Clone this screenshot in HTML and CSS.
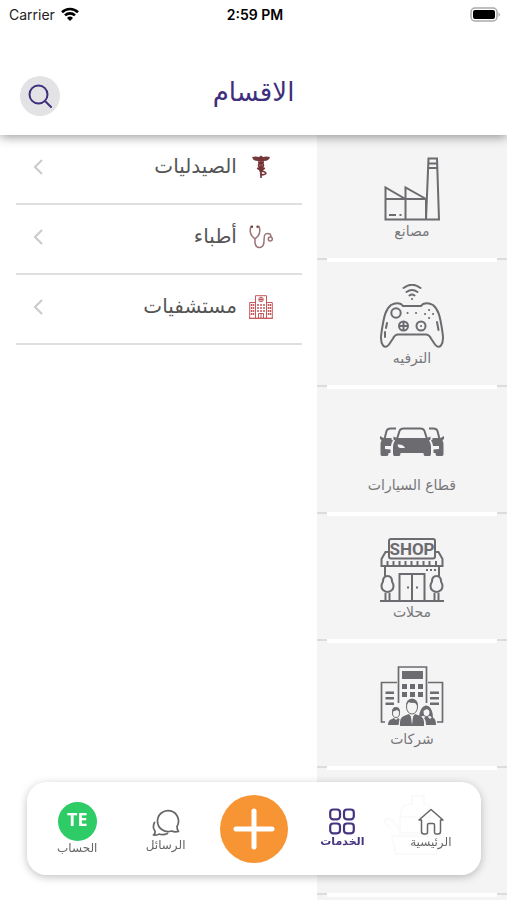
FILE: index.html
```html
<!DOCTYPE html>
<html lang="ar" dir="rtl">
<head>
<meta charset="utf-8">
<meta name="viewport" content="width=device-width, initial-scale=1">
<title>الاقسام</title>
<link rel="stylesheet" href="styles.css">
</head>
<body>
<div class="app">
  <header class="top">
    <div class="status" dir="ltr">
      <div class="carrier">Carrier
        <svg width="18" height="14" viewBox="0 0 18 14" aria-hidden="true"><g fill="none" stroke="#000" stroke-width="2.6"><path d="M1 5.2a11.6 11.6 0 0 1 16 0"/><path d="M4 8.4a7.2 7.2 0 0 1 10 0"/></g><path d="M9 14 6 10.9a4.4 4.4 0 0 1 6 0z"/></svg>
      </div>
      <div class="time">2:59 PM</div>
      <svg class="battery" width="31" height="15" viewBox="0 0 31 15" aria-hidden="true"><rect x="1" y="1" width="26" height="13" rx="4" fill="#fff" stroke="#aaa" stroke-width="1.5"/><rect x="3" y="3" width="22" height="9" rx="2"/><path d="M28.500 5.200q3 2.300 0 4.600z" fill="#aaa"/></svg>
    </div>
    <div class="bar">
      <h1 class="title">الاقسام</h1>
      <button class="search" aria-label="بحث">
        <svg width="24" height="24" viewBox="0 0 24 24" fill="none" stroke="#3f2f7c" stroke-width="2" stroke-linecap="round"><circle cx="10.500" cy="10.500" r="9"/><path d="m17 17 6 6"/></svg>
      </button>
    </div>
  </header>

  <main class="content">
    <nav class="tiles" aria-label="الاقسام">
      <a class="tile" href="#">
        <svg width="64" height="64" viewBox="0 0 64 64" fill="none" stroke="#6b6b70" stroke-width="2"><path d="M5.500 62.500V30.500L25.500 42V30.500L46 42V62.500zM5.500 42H46M25.500 42v20.500M46 62.500 48.500 1.500h8.500l2 61H46M48 6.500h9.500M48 11h10"/><path d="M9 58h7M19.500 58h2"/></svg>
        <span>مصانع</span>
      </a>
      <a class="tile" href="#">
        <svg width="64" height="64" viewBox="0 0 64 64" fill="none" stroke="#6b6b70" stroke-width="2"><path d="M18 50.500h28q3 0 5 4l4 6q3 4 6 1 3-4 1.500-13C60 31 58 25 53 21q-5-3-10-1l-2 2H23l-2-2q-5-2-10 1C6 25 4 31 1.500 48.500Q0 57.500 3 61.500q3 3 6-1l4-6q2-4 5-4z"/><circle cx="16" cy="29" r="4.700"/><circle cx="23.500" cy="42" r="4.500"/><path d="M23.500 38v8M19.500 42h8"/><circle cx="41" cy="42" r="4.500"/><g stroke-linecap="round"><path d="M7 39l-1 5M5 48v5M57 38l1.500 8M41 42h.1M27.500 29h.1M36 29h.1M45 30h.1M53 30h.1M49 26h.1M49 34h.1"/><path d="M23.500 4q8.500-6.500 17 0M26.500 8q5.500-4 11 0M29.500 11.500q2.500-2 5 0M32 15h.1"/></g></svg>
        <span>الترفيه</span>
      </a>
      <a class="tile" href="#">
        <svg width="64" height="64" viewBox="0 0 64 64"><g fill="none" stroke="#6b6b70" stroke-width="2"><path d="M17 28l2.500-8q1-2.500 4-2.500h17q3 0 4 2.500L47 28M4.500 28l2-8q1-2.500 4-2.500H16M59.500 28l-2-8q-1-2.500-4-2.500H49"/></g><g fill="#6b6b70"><path d="M17 27h30l3.500-1.500v3L49 29.500q2 2.500 2 6V42q0 3-1 3h-5q-1.500 0-1.500-3h-23q0 3-1.500 3h-5q-1 0-1-3v-6.500q0-3.500 2-6l-1.500-1v-3z"/><path d="M3.500 27 0 25v3l1.500 1Q.500 31 .500 35v8q0 2 1.500 2h5q1.500 0 1.500-3H10.500v-3.500L5 38v-3h6q0-3 2-5.500l-1.500-1V27z"/><path d="m60.500 27 3.500-2v3l-1.500 1q1 2 1 6v8q0 2-1.500 2h-5q-1.500 0-1.500-3H53.500v-3.500L59 38v-3h-6q0-3-2-5.500l1.500-1V27z"/></g><path d="M17.500 33.500q6-.5 7.500 3.500h-4.500q-2.500 0-3-3.500z" fill="#f4f4f4"/></svg>
        <span>قطاع السيارات</span>
      </a>
      <a class="tile" href="#">
        <svg width="64" height="64" viewBox="0 0 64 64" fill="none" stroke="#6b6b70" stroke-width="2"><rect x="9" y="1" width="46" height="19.500" rx="2"/><text class="shop" x="32" y="17" text-anchor="middle">SHOP</text><path d="M9 14H5.500L1.500 21v7h61v-7L58.500 14H55M7.500 28v-5M13.500 28v-5M19.500 28v-5M25.500 28v-5M31.500 28v-5M37.500 28v-5M43.500 28v-5M49.500 28v-5M56 28v-5M5 28v10M59 28v10M19.500 63V36h25v27M32 36v27M0 63h64M5.500 63v-8M9.500 63v-8M54.500 63v-8M58.500 63v-8"/><path d="M7.500 38q4.500 0 4.500 5.500 3 5 0 8.500-4.500 4-9 0-3-3.500 0-8.500Q3 38 7.500 38zM56.500 38q4.500 0 4.500 5.500 3 5 0 8.500-4.500 4-9 0-3-3.500 0-8.500 0-5.500 4.500-5.500z"/><path d="M46 32h2M50 32h2M54 32h2M27 49.500h2M36 49.500h2"/></svg>
        <span>محلات</span>
      </a>
      <a class="tile" href="#">
        <svg width="64" height="64" viewBox="0 0 64 64"><path d="M18.500 38V2h28v36M17 17.500H1.500V57H5M48 17.500h14.500V57H57" fill="none" stroke="#6b6b70" stroke-width="1.700"/><g fill="#6b6b70"><path d="M22 6h21v8H22zM22 19h5v5h-5zM30 19h5v5h-5zM38 19h5v5h-5zM22 27h5v5h-5zM30 27h5v5h-5zM38 27h5v5h-5zM5.500 26.500H14V29H5.500zM5.500 32H14v2.500H5.500zM5.500 37.500H14V40H5.500zM50 26.500h9V29h-9zM50 32h9v2.500h-9zM50 37.500h9V40h-9z"/><path d="M20 61q-1-9 5-10.500l4-1.500 3 4 3-4 4 1.500q6 1.500 5 10.500zM8 60q0-5 4-6l2-1 2 2 2-2 1.500 1L18.500 60zM46 60q0-5-2-7l3-2 3 3 2-2q4 1 4 8z"/><path d="M39 52q1-10 6.500-11.500 7 0 7.500 12.500l-3-2H43z"/></g><g fill="#f4f4f4" stroke="#6b6b70"><ellipse cx="32" cy="42" rx="5.500" ry="7"/><ellipse cx="16" cy="48" rx="3.500" ry="4.500"/><ellipse cx="46.500" cy="47" rx="3.500" ry="4.500"/></g><path d="M26 41q0-7 6-7.500 6 .5 6 7.500l-3-3q-5 0-7-1zM12 47q0-5 4-5t4 5l-3-2zM43 46q2-5 5-4l3 5-4-3z" fill="#6b6b70"/><path d="m31 52 1 8 1-8z" fill="#f4f4f4"/></svg>
        <span>شركات</span>
      </a>
      <a class="tile" href="#" aria-label="قسم آخر">
        <svg width="64" height="64" viewBox="0 0 64 64" fill="none" stroke="#6b6b70" stroke-width="2"><path d="M22 16q2-4 10-4V4h12v8q5 0 6 5v8H20zM20 25h30v16H20zM10 36q-6-4-5-8 5-3 9 2l6 8M12 44h48l-4 18H16z"/></svg>
      </a>
      <a class="tile" href="#" aria-label="المزيد"></a>
    </nav>

    <ul class="list">
      <li><a class="row" href="#">
        <svg width="24" height="24" viewBox="0 0 24 24"><path d="M3 2q4-1 7 0l2-1.500L14 2q3-1 7 0-1 4-6 4H9Q4 6 3 2z" fill="#74383b"/><path d="M9 6h6l-1 6-1 8-1 3-1-3-1-8z" fill="#b98f90"/><path d="M12 2v21M9 7q6 1 5.500 3.500T10 13t3.500 3-1.500 4M15 7q-6 1-5.500 3.500T14 13t-3.500 3" fill="none" stroke="#743034" stroke-width="1.500"/></svg>
        <span class="name">الصيدليات</span>
        <svg class="chev" width="9" height="16" viewBox="0 0 9 16"><path d="M8 1 1 8l7 7"/></svg>
      </a></li>
      <li><a class="row" href="#">
        <svg width="24" height="24" viewBox="0 0 24 24" fill="none" stroke="#9c7375" stroke-width="1.500"><path d="M4 1.500H2Q0 7 3 11l3 3 3-3q3-4 1-9.500H8M6 14v4q1 5 5 4.500t4-6.500 1.500-7 4.500 0q1 1 1 3"/><circle cx="21.300" cy="14" r="2"/><path d="M3 .8v2M8.500.8v2" stroke="#683c3f" stroke-width="2"/></svg>
        <span class="name">أطباء</span>
        <svg class="chev" width="9" height="16" viewBox="0 0 9 16"><path d="M8 1 1 8l7 7"/></svg>
      </a></li>
      <li><a class="row" href="#">
        <svg width="24" height="24" viewBox="0 0 24 24" fill="none" stroke="#c4585b"><path d="M6.500 23V.7h11V23M6 7.500H.7v15.800h22.600V7.500H18M0 23.300h24"/><circle cx="12" cy="4.500" r="2.300"/><path d="M12 2.500v4M10 4.500h4M9.500 23v-4.500h5V23M12 18.500V23"/><path d="M2.500 9v12M4.500 9v12M19.500 9v12M21.500 9v12M9 9v8M12 9v8M15 9v8" stroke-width="1.500" stroke-dasharray="2 1"/></svg>
        <span class="name">مستشفيات</span>
        <svg class="chev" width="9" height="16" viewBox="0 0 9 16"><path d="M8 1 1 8l7 7"/></svg>
      </a></li>
    </ul>
  </main>

  <nav class="dock" aria-label="التنقل">
    <a class="tab" href="#">
      <svg width="26" height="27" viewBox="0 0 26 27" fill="none" stroke="#666" stroke-width="1.500" stroke-linejoin="round"><path d="M1 12 13 1.500 25 12h-2.500v11.500q0 2.500-2.500 2.500h-2q-1.500 0-1.500-2v-7q0-1.500-1.500-1.500h-4q-1.500 0-1.500 1.500v7q0 2-1.500 2H6q-2.500 0-2.500-2.500V12z"/></svg>
      <span>الرئيسية</span>
    </a>
    <a class="tab active" href="#" aria-current="page">
      <svg width="26" height="27" viewBox="0 0 26 27" fill="none" stroke="#46347f" stroke-width="2.200"><rect x="1.200" y="1.500" width="9.800" height="9.800" rx="3"/><rect x="15" y="1.500" width="9.800" height="9.800" rx="3"/><rect x="1.200" y="15.500" width="9.800" height="9.800" rx="3"/><rect x="15" y="15.500" width="9.800" height="9.800" rx="3"/></svg>
      <span>الخدمات</span>
    </a>
    <button class="add" aria-label="إضافة">
      <svg width="42" height="42" viewBox="0 0 42 42" stroke="#fff" stroke-width="5" stroke-linecap="round"><path d="M21 3v36M3 21h36"/></svg>
    </button>
    <a class="tab messages" href="#">
      <svg width="28" height="27" viewBox="0 0 28 27" fill="none" stroke="#666" stroke-width="1.700" stroke-linejoin="round" stroke-linecap="round"><path d="M19.500 22A10.500 10.500 0 1 1 25 17.500q0 3 1.500 5-3.500 1-7-.5z"/><path d="M2.500 13.500q-2.500 5 .5 8.500.500 3-1.500 4 4 .500 5.500-1 4 1.500 8.500-.5"/></svg>
      <span>الرسائل</span>
    </a>
    <a class="tab account" href="#">
      <b class="avatar">TE</b>
      <span>الحساب</span>
    </a>
  </nav>
</div>
</body>
</html>
```
FILE: styles.css
```css
* { box-sizing: border-box; }
body {
  margin: 0;
  background: #fff;
  color: #555;
  font-family: "DejaVu Sans", sans-serif;
}
a { color: inherit; text-decoration: none; }
button { border: 0; padding: 0; font: inherit; }
svg { display: block; flex: none; }

.app {
  display: flex;
  flex-direction: column;
  height: 100vh;
  overflow: hidden;
}

.top {
  position: relative;
  z-index: 1;
  flex: none;
  background: #fff;
  box-shadow: 0 2px 10px rgba(0, 0, 0, 0.4);
}
.status {
  display: grid;
  grid-template-columns: 1fr auto 1fr;
  align-items: center;
  height: 28px;
  padding: 0 6px 0 9px;
  font: 14px "Inter", sans-serif;
  color: #222;
}
.carrier { display: flex; align-items: center; gap: 6px; }
.time { font-weight: 600; color: #000; }
.battery { justify-self: end; }
.bar {
  display: grid;
  grid-template-columns: 1fr auto 1fr;
  align-items: center;
  height: 107px;
  padding: 28px 20px 0;
}
.title {
  grid-column: 2;
  margin: 0;
  padding-bottom: 8px;
  font-size: 26px;
  line-height: 28px;
  font-weight: 400;
  color: #3f2f7c;
}
.search {
  display: grid;
  place-items: center;
  justify-self: end;
  width: 40px;
  height: 40px;
  border-radius: 50%;
  background: #e3e3e5;
}

.content {
  display: grid;
  grid-template-columns: 3fr 5fr;
  flex: 1;
  min-height: 0;
  margin-top: -4px;
}
.tiles { background: #f4f4f4; }
.tile {
  display: flex;
  flex-direction: column;
  align-items: center;
  height: 127px;
  padding-top: 26px;
  font-size: 14px;
  line-height: 20px;
  color: #77777b;
  background:
    linear-gradient(#fff, #fff) center top / calc(100% - 20px) 4px no-repeat,
    linear-gradient(#dcdcdc, #dcdcdc) top / 100% 2px no-repeat;
}
.shop {
  font: 700 17px "Roboto", sans-serif;
  fill: #6b6b70;
  stroke: none;
}

.list {
  margin: 0;
  padding: 4px 15px 0 16px;
  list-style: none;
}
.row {
  display: flex;
  align-items: center;
  height: 70px;
  padding: 0 29px 4px 18px;
  border-bottom: 2px solid #dedfe0;
  font-size: 20px;
  line-height: 24px;
}
.name { flex: 1; padding-right: 12px; padding-bottom: 2px; }
.chev { fill: none; stroke: #cacaca; stroke-width: 2; }

.dock {
  position: fixed;
  right: 26px;
  bottom: 25px;
  left: 27px;
  display: grid;
  grid-template-columns: repeat(5, 1fr);
  justify-items: center;
  align-items: center;
  height: 93px;
  padding: 0 6px;
  border-radius: 20px;
  background: rgba(255, 255, 255, 0.97);
  box-shadow: 0 2px 8px rgba(0, 0, 0, 0.25);
  z-index: 2;
}
.tab {
  display: flex;
  flex-direction: column;
  align-items: center;
  font-size: 12px;
  line-height: 14px;
  color: #666;
}
.active { color: #46347f; font-size: 11px; font-weight: 700; }
.messages { padding-top: 4px; gap: 2px; }
.avatar {
  display: grid;
  place-items: center;
  width: 39px;
  height: 39px;
  padding-bottom: 6px;
  border-radius: 50%;
  background: #2ecc66;
  color: #fff;
  font: 700 18px "Open Sans", sans-serif;
}
.add {
  display: grid;
  place-items: center;
  width: 68px;
  height: 68px;
  border-radius: 50%;
  background: #f79433;
}
```
